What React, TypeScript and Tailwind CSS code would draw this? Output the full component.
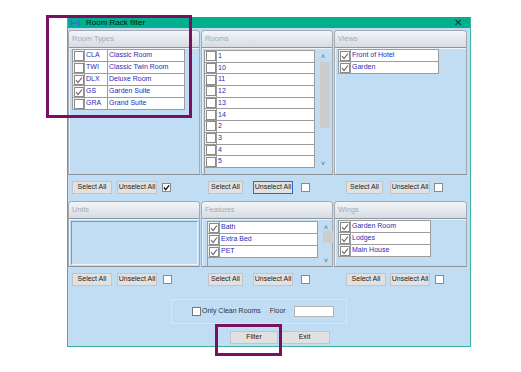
const FONT = { fontFamily: '"Liberation Sans", Arial, sans-serif' };

function Check({ on, dark }: { on?: boolean; dark?: boolean }) {
  return (
    <div className="flex h-[10px] w-[10px] items-center justify-center border border-[#8a8a8a] bg-white">
      {on && (
        <svg width="8" height="8" viewBox="0 0 8 8">
          <polyline points="1,4 3,6.5 7,1.5" fill="none" stroke={dark ? "#222" : "#666"} strokeWidth="1.2" />
        </svg>
      )}
    </div>
  );
}

type Item = { on?: boolean; code?: string; name: string };

function List({ items, w, codeW, rowH }: { items: Item[]; w: number; codeW?: number; rowH: string }) {
  return (
    <div className="flex flex-col border-l border-t border-[#9c9c9c]" style={{ width: w }}>
      {items.map((it, i) => (
        <div key={i} className={`flex ${rowH} border-b border-[#9c9c9c]`}>
          <div className="flex w-[12px] shrink-0 items-center justify-center border-r border-[#9c9c9c] bg-[#f2f2f2]">
            <Check on={it.on} />
          </div>
          {it.code !== undefined && (
            <div
              className="flex shrink-0 items-center border-r border-[#9c9c9c] bg-white pl-[1px] text-[7px] text-[#2b2bb0]"
              style={{ width: codeW }}
            >
              {it.code}
            </div>
          )}
          <div className="flex flex-1 items-center border-r border-[#9c9c9c] bg-white pl-[1px] text-[7px] text-[#2b2bb0]">
            {it.name}
          </div>
        </div>
      ))}
    </div>
  );
}

function Panel({ title, className, children }: { title: string; className: string; children?: React.ReactNode }) {
  return (
    <div className={`flex flex-col rounded-t-[4px] border border-[#a3aab2] border-b-[#8a9199] bg-[#c0ddf3] ${className}`}>
      <div className="h-[17px] shrink-0 rounded-t-[3px] border-b border-[#8e969e] bg-gradient-to-b from-[#f3f5f7] to-[#d6dce3] pl-[3px] text-[7.5px] leading-[16px] text-[#a2aab3]">
        {title}
      </div>
      <div className="flex flex-1 border-l border-t border-[#eef3f8]">{children}</div>
    </div>
  );
}

function Scroll({ h, thumbTop, thumbH }: { h: string; thumbTop: string; thumbH: string }) {
  return (
    <div className={`relative flex w-[16px] flex-col items-center justify-between ${h} text-[7px] leading-none text-[#606060]`}>
      <span className="mt-[3px]">˄</span>
      <div className={`absolute left-[5px] w-[10px] bg-[#cdcdcd] ${thumbTop} ${thumbH}`} />
      <span className="mb-[1px]">˅</span>
    </div>
  );
}

function Btn({ label, w, focus }: { label: string; w: string; focus?: boolean }) {
  return (
    <div
      className={`flex h-[13px] ${w} items-center justify-center bg-[#e1e1e1] text-[7px] text-[#222] ${
        focus ? "border border-[#1e6fd0]" : "border border-[#c4c4c4]"
      }`}
    >
      {label}
    </div>
  );
}

function Actions({ pl, g1, g2, w1, w2, on, focus }: { pl: string; g1: string; g2: string; w1: string; w2: string; on?: boolean; focus?: boolean }) {
  return (
    <div className={`flex items-center ${pl}`}>
      <Btn label="Select All" w={w1} />
      <div className={g1} />
      <Btn label="Unselect All" w={w2} focus={focus} />
      <div className={g2} />
      <div className="flex h-[9px] w-[9px] items-center justify-center border border-[#8a8a8a] bg-white">
        {on && (
          <svg width="7" height="7" viewBox="0 0 8 8">
            <polyline points="1,4 3,6.5 7,1.5" fill="none" stroke="#111" strokeWidth="1.5" />
          </svg>
        )}
      </div>
    </div>
  );
}

const roomTypes: Item[] = [
  { code: "CLA", name: "Classic Room" },
  { code: "TWI", name: "Classic Twin Room" },
  { on: true, code: "DLX", name: "Deluxe Room" },
  { on: true, code: "GS", name: "Garden Suite" },
  { code: "GRA", name: "Grand Suite" },
];
const rooms: Item[] = ["1", "10", "11", "12", "13", "14", "2", "3", "4", "5"].map((n) => ({ name: n }));

export default function App() {
  return (
    <div className="relative h-[372px] w-[521px] overflow-hidden bg-white pl-[67px] pt-[17px]" style={FONT}>
      <div className="flex w-[404px] flex-col border-x border-b border-[#3fb3a0]">
        {/* Title bar */}
        <div className="flex h-[11px] items-center bg-[#00b08f] pl-[2px] pr-[8px]">
          <svg width="10" height="8" viewBox="0 0 10 8">
            <rect x="0.5" y="1" width="1.6" height="6" fill="#2f6fe0" />
            <rect x="7.9" y="1" width="1.6" height="6" fill="#2f6fe0" />
            <rect x="1" y="3.5" width="8" height="1.4" fill="#2f6fe0" />
          </svg>
          <span className="ml-[6px] text-[8px] leading-none text-[#061a15]">Room Rack filter</span>
          <span className="ml-auto text-[10px] leading-none text-[#12332b]">✕</span>
        </div>

        {/* Body */}
        <div className="flex h-[318px] flex-col bg-[#c0ddf3] pt-[2px]">
          <div className="grid grid-cols-[132px_132px_133px] gap-x-[1px]">
            <Panel title="Room Types" className="h-[145px]">
              <div className="pl-[2px]">
                <List items={roomTypes} w={113} codeW={23} rowH="h-[12px]" />
              </div>
            </Panel>
            <Panel title="Rooms" className="h-[145px]">
              <div className="flex pl-[1px] pt-[1px]">
                <List items={rooms} w={111} rowH="h-[11.7px]" />
                <Scroll h="h-[118px]" thumbTop="top-[12px]" thumbH="h-[66px]" />
              </div>
            </Panel>
            <Panel title="Views" className="h-[145px]">
              <div className="pl-[2px]">
                <List items={[{ on: true, name: "Front of Hotel" }, { on: true, name: "Garden" }]} w={101} rowH="h-[12px]" />
              </div>
            </Panel>
          </div>

          <div className="mt-[6px] grid grid-cols-[132px_132px_133px] gap-x-[1px]">
            <Actions pl="pl-[4px]" w1="w-[40px]" w2="w-[40px]" g1="w-[5px]" g2="w-[5px]" on />
            <Actions pl="pl-[7px]" w1="w-[35px]" w2="w-[40px]" g1="w-[10px]" g2="w-[8px]" focus />
            <Actions pl="pl-[12px]" w1="w-[37px]" w2="w-[40px]" g1="w-[7px]" g2="w-[4px]" />
          </div>

          <div className="mt-[7px] grid grid-cols-[132px_132px_133px] gap-x-[1px]">
            <Panel title="Units" className="h-[66px]">
              <div className="m-[1px] flex-1 border border-[#8e969e] border-b-[#f0f4f8] border-r-[#f0f4f8]" />
            </Panel>
            <Panel title="Features" className="h-[66px]">
              <div className="flex pl-[4px] pt-[1px]">
                <List
                  items={[{ on: true, name: "Bath" }, { on: true, name: "Extra Bed" }, { on: true, name: "PET" }]}
                  w={111}
                  rowH="h-[12px]"
                />
                <Scroll h="h-[44px]" thumbTop="top-[10px]" thumbH="h-[12px]" />
              </div>
            </Panel>
            <Panel title="Wings" className="h-[66px]">
              <div className="pl-[2px]">
                <List
                  items={[{ on: true, name: "Garden Room" }, { on: true, name: "Lodges" }, { on: true, name: "Main House" }]}
                  w={93}
                  rowH="h-[12px]"
                />
              </div>
            </Panel>
          </div>

          <div className="mt-[6px] grid grid-cols-[132px_132px_133px] gap-x-[1px]">
            <Actions pl="pl-[4px]" w1="w-[40px]" w2="w-[40px]" g1="w-[5px]" g2="w-[6px]" />
            <Actions pl="pl-[7px]" w1="w-[35px]" w2="w-[40px]" g1="w-[10px]" g2="w-[8px]" />
            <Actions pl="pl-[12px]" w1="w-[40px]" w2="w-[40px]" g1="w-[4px]" g2="w-[5px]" />
          </div>

          {/* Options group */}
          <div className="ml-[103px] mt-[13px] flex h-[25px] w-[176px] items-center border border-[#d7e6f2] pl-[20px]">
            <div className="h-[9px] w-[9px] border border-[#777] bg-white" />
            <span className="ml-[1px] text-[7px] text-[#333]">Only Clean Rooms</span>
            <span className="ml-[9px] text-[7px] text-[#333]">Floor</span>
            <div className="ml-[8px] h-[11px] w-[40px] border border-[#b5b5b5] bg-white" />
          </div>

          <div className="ml-[162px] mt-[7px] flex gap-[1px]">
            <div className="flex h-[13px] w-[48px] items-center justify-center border border-[#c4c4c4] bg-[#e1e1e1] text-[7px] text-[#222]">
              Filter
            </div>
            <div className="flex h-[13px] w-[51px] items-center justify-center border border-[#c4c4c4] bg-[#e1e1e1] text-[7px] text-[#222]">
              Exit
            </div>
          </div>
        </div>
      </div>

      {/* Highlight annotations */}
      <div className="absolute left-[46px] top-[15px] h-[103px] w-[146px] border-[3px] border-[#7a105f]" />
      <div className="absolute left-[215px] top-[324px] h-[32px] w-[67px] border-[3px] border-[#7a105f]" />
    </div>
  );
}
